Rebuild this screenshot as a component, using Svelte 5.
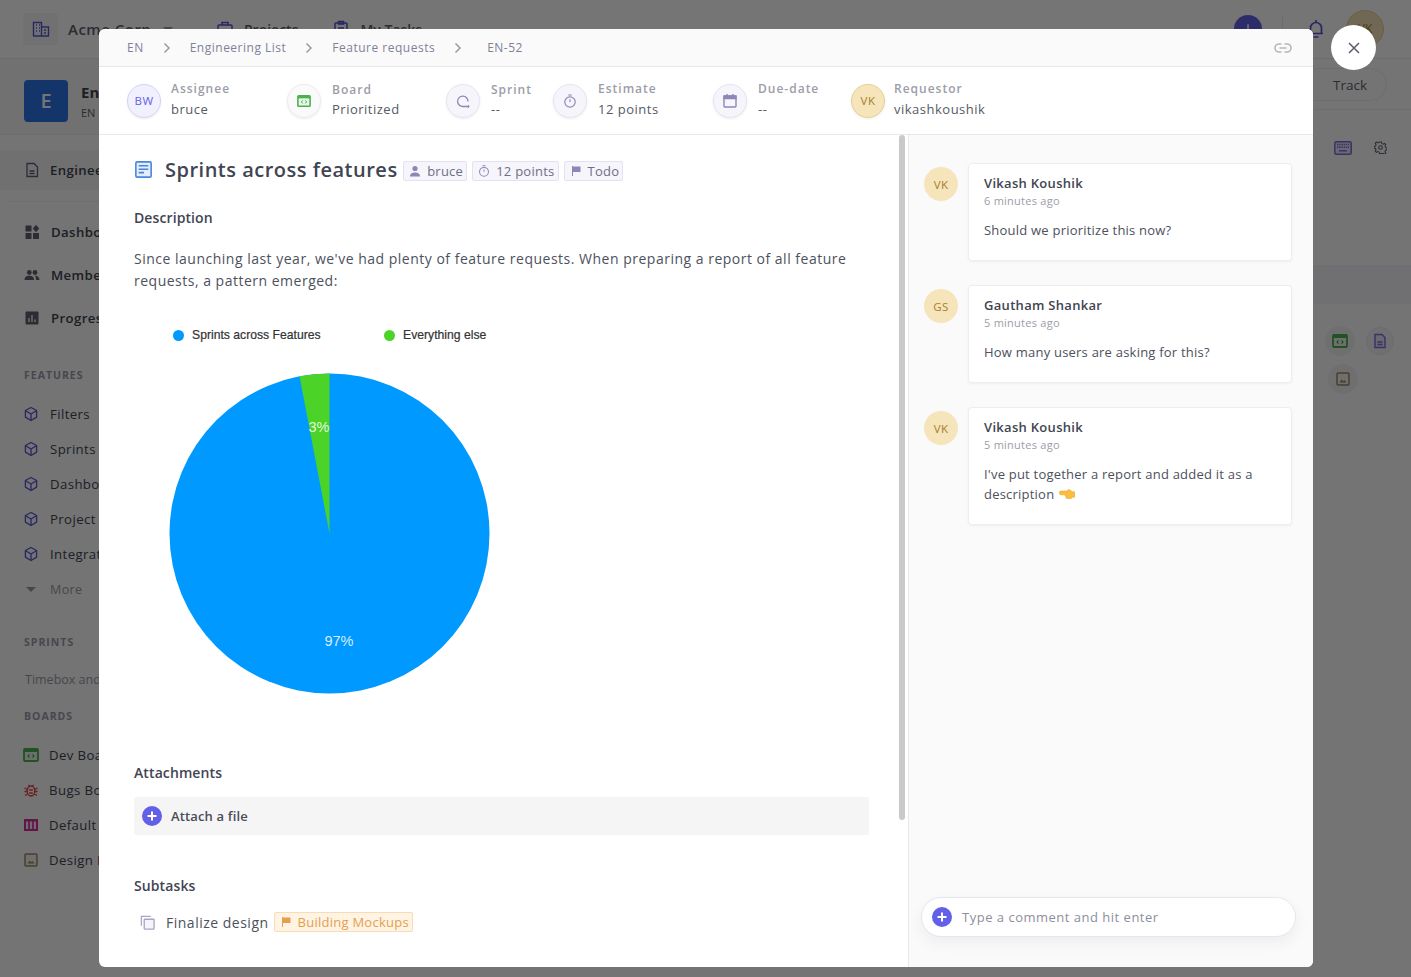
<script>
	const features = ['Filters', 'Sprints', 'Dashboards', 'Project Sync', 'Integrations'];
	const boards = [
		{ label: 'Dev Board', kind: 'dev' },
		{ label: 'Bugs Board', kind: 'bug' },
		{ label: 'Default Board', kind: 'kanban' },
		{ label: 'Design Board', kind: 'image' }
	];
	const crumbs = ['EN', 'Engineering List', 'Feature requests', 'EN-52'];
	const comments = [
		{ initials: 'VK', name: 'Vikash Koushik', time: '6 minutes ago', text: 'Should we prioritize this now?' },
		{ initials: 'GS', name: 'Gautham Shankar', time: '5 minutes ago', text: 'How many users are asking for this?' },
		{ initials: 'VK', name: 'Vikash Koushik', time: '5 minutes ago', text: "I've put together a report and added it as a description", hand: true }
	];

	// 3% slice, drawn counter clockwise from 12 o'clock
	const cx = 160.5, cy = 160.5, r = 160;
	const angle = 0.03 * 2 * Math.PI;
	const sx = cx - r * Math.sin(angle);
	const sy = cy - r * Math.cos(angle);
	const slice = `M${cx} ${cy} L${sx.toFixed(2)} ${sy.toFixed(2)} A${r} ${r} 0 0 1 ${cx} ${cy - r} Z`;
</script>

{#snippet cube()}
	<svg class="ico16" viewBox="0 0 16 16" fill="none" stroke="#5a55d6" stroke-width="1.3" stroke-linejoin="round">
		<path d="M8 1.500l5.600 3v6.600L8 14.500l-5.600-3.400V4.500z" /><path d="M2.600 4.700L8 8l5.400-3.300M8 8v6.300" />
	</svg>
{/snippet}

{#snippet devBoard(size)}
	<svg width={size} height={size} viewBox="0 0 16 16" fill="none">
		<rect x="1" y="2" width="14" height="12" rx="1" fill="#e9f7e7" stroke="#4caf50" stroke-width="1.800" />
		<rect x="1" y="2" width="14" height="3" fill="#4caf50" />
		<path d="M6.500 7.300L5 9l1.500 1.700M9.500 7.300L11 9l-1.500 1.700" stroke="#3a9d3f" stroke-width="1.100" />
	</svg>
{/snippet}

{#snippet imageIcon()}
	<svg class="ico16" viewBox="0 0 16 16" fill="none">
		<rect x="2" y="2" width="12" height="12" rx="1" stroke="#9b8a6a" stroke-width="1.500" fill="#f4f1ea" />
		<path d="M4.500 11.500l2.200-3 1.600 1.800 1.200-1.200 2 2.400z" fill="#9b8a6a" />
	</svg>
{/snippet}

{#snippet plusDot()}
	<svg class="plus" viewBox="0 0 20 20">
		<circle cx="10" cy="10" r="10" fill="#6360e8" />
		<path d="M10 5.500v9M5.500 10h9" stroke="#fff" stroke-width="2" />
	</svg>
{/snippet}

{#snippet timer(color)}
	<svg class="ico14" viewBox="0 0 14 14" fill="none" stroke={color} stroke-width="1.200">
		<circle cx="7" cy="8" r="5.200" /><path d="M5.200 1h3.600M7 5.200V8" />
	</svg>
{/snippet}

{#snippet flag(color)}
	<svg class="ico12" viewBox="0 0 12 12"><path d="M2 1h1v10H2zM3 1.500h7.500v5.500H3z" fill={color} /></svg>
{/snippet}

<div class="app">
	<header class="topbar">
		<div class="org">
			<span class="org-icon">
				<svg viewBox="0 0 18 18" width="18" height="18" fill="none" stroke="#5a55d6" stroke-width="1.400">
					<path d="M1.500 16V2.500h8V16M9.500 7h7v9M1 16h16" />
					<path d="M4 5h1M7 5h1M4 8h1M7 8h1M4 11h1M7 11h1M12 10h2M12 13h2" stroke-width="1.300" />
				</svg>
			</span>
			<span class="org-name">Acme Corp</span>
			<span class="caret"></span>
		</div>
		<nav class="top-links">
			<span class="top-link">
				<svg class="ico18" viewBox="0 0 18 18" fill="none" stroke="#5a55d6" stroke-width="1.500"><rect x="2" y="5" width="14" height="11" rx="1" /><path d="M6 5V2.500h6V5" /></svg>
				Projects
			</span>
			<span class="top-link">
				<svg class="ico18" viewBox="0 0 18 18" fill="none" stroke="#5a55d6" stroke-width="1.500"><rect x="3" y="3" width="12" height="13" rx="1" /><path d="M6.500 1.500h5V4h-5zM6 8h6M6 11h6" /></svg>
				My Tasks
			</span>
		</nav>
		<div class="top-right">
			<span class="add-circle">+</span>
			<span class="top-sep"></span>
			<svg class="bell" viewBox="0 0 16 20" fill="none" stroke="#5a55d6" stroke-width="1.700">
				<path d="M2.500 14.500V9a5.500 5.500 0 0 1 11 0v5.500zM1 14.500h14M8 1v2M5.500 18h5" />
			</svg>
			<span class="top-avatar">VK</span>
		</div>
	</header>

	<div class="shell">
		<aside class="sidebar">
			<div class="project">
				<span class="project-logo">E</span>
				<div>
					<div class="project-name">En</div>
					<div class="project-key">EN</div>
				</div>
			</div>
			<div class="nav-active">
				<svg class="ico16" viewBox="0 0 16 16" fill="none" stroke="#5e6270" stroke-width="1.300"><path d="M3 1.500h7l3.500 3.500v9.500H3zM5.500 9h5M5.500 11.500h5" /></svg>
				<span>Engineering List</span>
			</div>
			<div class="nav-main">
				<div class="nav-strong">
					<svg class="ico16" viewBox="0 0 16 16" fill="#5e6270"><rect x="1.500" y="1.500" width="6" height="6" /><rect x="1.500" y="9" width="6" height="6" /><rect x="9" y="9" width="6" height="6" /><path d="M12 .8l3.200 3.700L12 8.200 8.800 4.500z" /></svg>
					<span>Dashboard</span>
				</div>
				<div class="nav-strong">
					<svg class="ico16" viewBox="0 0 16 16" fill="#5e6270"><circle cx="5.300" cy="5.500" r="2.400" /><circle cx="11" cy="5.500" r="2.400" /><path d="M.5 13c0-3 2.200-4.300 4.800-4.300s4.800 1.300 4.800 4.300zM11 13h4.500c0-2.800-2-4.300-4.700-4.300 1 .9 1.200 2.700 1.200 4.300z" /></svg>
					<span>Members</span>
				</div>
				<div class="nav-strong">
					<svg class="ico16" viewBox="0 0 16 16"><rect x="1.500" y="1.500" width="13" height="13" rx="1" fill="#5e6270" /><path d="M5 12V8M8 12V5M11 12V9.500" stroke="#fff" stroke-width="1.300" /></svg>
					<span>Progress</span>
				</div>
			</div>

			<h4 class="side-title features-title">FEATURES</h4>
			{#each features as item}
				<div class="nav-item">{@render cube()}<span>{item}</span></div>
			{/each}
			<div class="nav-more"><span class="more-caret"></span><span>More</span></div>

			<h4 class="side-title sprints-title">SPRINTS</h4>
			<div class="side-hint">Timebox and ship</div>

			<h4 class="side-title boards-title">BOARDS</h4>
			{#each boards as board}
				<div class="nav-item board">
					{#if board.kind === 'dev'}
						{@render devBoard(16)}
					{:else if board.kind === 'bug'}
						<svg class="ico16" viewBox="0 0 16 16" fill="none" stroke="#e2433f" stroke-width="1.300"><ellipse cx="8" cy="9" rx="3.800" ry="5" /><path d="M5.500 3l1.500 1.500M10.500 3L9 4.500M1.500 6l3 1.500M14.500 6l-3 1.500M1.500 9.500h2.700M14.500 9.500h-2.700M2 13.500l2.600-1.500M14 13.500L11.400 12M6.200 8h3.600M6.200 11h3.600" /></svg>
					{:else if board.kind === 'kanban'}
						<svg class="ico16" viewBox="0 0 16 16"><rect x="1" y="2" width="14" height="12" fill="#d6309c" /><path d="M3 4.500h2.200v7.500H3zM6.900 4.500h2.200v7.500H6.900zM10.800 4.500H13v7.500h-2.200z" fill="#fbe4f3" /></svg>
					{:else}
						{@render imageIcon()}
					{/if}
					<span>{board.label}</span>
				</div>
			{/each}
		</aside>

		<main class="main">
			<div class="main-head"><span class="track">Track</span></div>
			<div class="toolbar">
				<svg class="keyboard" viewBox="0 0 18 14"><rect x=".8" y=".8" width="16.400" height="12.400" rx="1.500" fill="#e4e2fb" stroke="#7e6bdc" stroke-width="1.500" /><path d="M3 3.500h12M3 6.200h12" stroke="#7e6bdc" stroke-width="1.400" stroke-dasharray="1.400 .8" /><path d="M5 9.800h8" stroke="#7e6bdc" stroke-width="1.400" /></svg>
				<svg class="gear" viewBox="0 0 14 14" fill="none" stroke="#5e6270" stroke-width="1.100"><circle cx="7" cy="7" r="2" /><path d="M6 1h2l.4 1.700 1.500.7 1.500-.9 1.300 1.400-.9 1.500.6 1.500 1.600.6v1.900l-1.600.5-.6 1.500.9 1.500-1.300 1.400-1.500-.9-1.500.6L8 13.500H6l-.4-1.500-1.500-.6-1.500.9-1.300-1.400.9-1.500-.6-1.500L0 7.900V6l1.600-.5.600-1.500-.9-1.500 1.300-1.400 1.500.9 1.500-.7z" /></svg>
			</div>
			<div class="row-highlight"></div>
			<div class="row-icons">
				<span class="round-icon soft">{@render devBoard(16)}</span>
				<span class="round-icon doc">
					<svg class="ico16" viewBox="0 0 16 16" fill="#e4e2fb" stroke="#7e6bdc" stroke-width="1.400"><path d="M3 1.500h7l3 3v10H3zM5.500 9h5M5.500 11.500h5" /></svg>
				</span>
			</div>
			<div class="row-icons second">
				<span class="round-icon soft">{@render imageIcon()}</span>
			</div>
		</main>
	</div>

	<div class="overlay"></div>

	<section class="modal">
		<div class="crumbs">
			{#each crumbs as crumb, i}
				<span class="crumb">{crumb}</span>
				{#if i < crumbs.length - 1}
					<svg class="chev" viewBox="0 0 8 12" fill="none" stroke="#9a9ca8" stroke-width="1.500"><path d="M1.500 1.500L6 6l-4.500 4.500" /></svg>
				{/if}
			{/each}
			<svg class="link-icon" viewBox="0 0 18 12" fill="none" stroke="#b4b6bf" stroke-width="1.600"><path d="M7.500 2H5a4 4 0 0 0 0 8h2.500M10.500 2H13a4 4 0 0 1 0 8h-2.500M5.500 6h7" /></svg>
		</div>

		<div class="meta">
			<div class="meta-item w-assignee">
				<span class="disc purple"><span>BW</span></span>
				<div class="meta-text"><label>Assignee</label><b>bruce</b></div>
			</div>
			<div class="meta-item w-board">
				<span class="disc plain">{@render devBoard(14)}</span>
				<div class="meta-text low"><label>Board</label><b>Prioritized</b></div>
			</div>
			<div class="meta-item w-sprint">
				<span class="disc lilac">
					<svg class="ico16" viewBox="0 0 16 16" fill="none" stroke="#8d87b8" stroke-width="1.300"><path d="M13 8.500A5.200 5.200 0 1 0 8 13.500h6" /><path d="M12.800 12l1.400 1.500-1.400 1.300" stroke-width="1" /></svg>
				</span>
				<div class="meta-text low"><label>Sprint</label><b>--</b></div>
			</div>
			<div class="meta-item w-estimate">
				<span class="disc lilac">{@render timer('#8d87b8')}</span>
				<div class="meta-text"><label>Estimate</label><b>12 points</b></div>
			</div>
			<div class="meta-item w-due">
				<span class="disc lilac">
					<svg class="ico16" viewBox="0 0 16 16" fill="none" stroke="#8d87b8" stroke-width="1.400"><rect x="2" y="3" width="12" height="11" rx="1" /><path d="M2 3h12v2.500H2z" fill="#8d87b8" /><path d="M5 1v2M11 1v2" /></svg>
				</span>
				<div class="meta-text"><label>Due-date</label><b>--</b></div>
			</div>
			<div class="meta-item w-requestor">
				<span class="disc gold"><span>VK</span></span>
				<div class="meta-text"><label>Requestor</label><b>vikashkoushik</b></div>
			</div>
		</div>

		<div class="body">
			<div class="detail">
				<div class="title-row">
					<svg class="story" viewBox="0 0 16 16"><rect x=".8" y=".8" width="14.400" height="14.400" rx="1.200" fill="#e3edfb" stroke="#4a86d8" stroke-width="1.500" /><path d="M3.500 4.500h9M3.500 7.700h9M3.500 10.900h5" stroke="#4a86d8" stroke-width="1.500" /></svg>
					<h1>Sprints across features</h1>
					<span class="tag">
						<svg class="ico12" viewBox="0 0 12 12" fill="#8d87b8"><circle cx="6" cy="3.500" r="2.600" /><path d="M1 11.500c0-3 2.200-4 5-4s5 1 5 4z" /></svg>
						bruce
					</span>
					<span class="tag">{@render timer('#8d87b8')} 12 points</span>
					<span class="tag">{@render flag('#8d87b8')} Todo</span>
				</div>

				<h3 class="desc-head">Description</h3>
				<p class="desc">Since launching last year, we've had plenty of feature requests. When preparing a report of all feature requests, a pattern emerged:</p>

				<div class="legend">
					<span class="legend-item first"><i class="dot blue"></i>Sprints across Features</span>
					<span class="legend-item"><i class="dot green"></i>Everything else</span>
				</div>
				<svg class="pie" width="321" height="321" viewBox="0 0 321 321">
					<circle {cx} {cy} {r} fill="#0099ff" />
					<path d={slice} fill="#4cd327" />
					<text x="150" y="59" class="pie-label" text-anchor="middle">3%</text>
					<text x="170" y="273" class="pie-label" text-anchor="middle">97%</text>
				</svg>

				<h3 class="attach-head">Attachments</h3>
				<div class="attach">{@render plusDot()}<span>Attach a file</span></div>

				<h3 class="sub-head">Subtasks</h3>
				<div class="subtask">
					<svg class="copy" viewBox="0 0 16 16" fill="none" stroke="#a8a4c8" stroke-width="1.400"><path d="M1.500 11.500V1.500h10" /><rect x="4.500" y="4.500" width="10.500" height="10.500" rx=".5" fill="#f5f4fb" /></svg>
					<span class="sub-name">Finalize design</span>
					<span class="tag orange">{@render flag('#e3a04f')} Building Mockups</span>
				</div>
				<span class="scrollbar"></span>
			</div>

			<aside class="activity">
				<div class="comments">
					{#each comments as c}
						<div class="comment">
							<span class="c-avatar">{c.initials}</span>
							<div class="c-card">
								<div class="c-name">{c.name}</div>
								<div class="c-time">{c.time}</div>
								<p class="c-text">
									{c.text}
									{#if c.hand}
										<svg class="hand" viewBox="0 0 16 11"><path d="M.5 3.200c0-.7.5-1.100 1.200-1.100H8c.4-.9 1.100-1.500 2-1.600 1 .5 2.500 1.400 3.200 2.200H15.500v5.500h-2c-.5.800-1.400 1.300-2.400 1.300H8.400c-.9 0-1.500-.6-1.500-1.300 0-.2 0-.4.100-.6-.5-.2-.8-.6-.8-1.100 0-.3.100-.5.200-.7H1.700C1 5.800.5 5 .5 4.300z" fill="#fbbe3c" stroke="#e79a18" stroke-width=".5" /></svg>
									{/if}
								</p>
							</div>
						</div>
					{/each}
				</div>
				<div class="comment-box">
					{@render plusDot()}
					<span>Type a comment and hit enter</span>
				</div>
			</aside>
		</div>
	</section>

	<button class="close" aria-label="close">
		<svg viewBox="0 0 12 12" width="12" height="12" fill="none" stroke="#5a5d68" stroke-width="1.500"><path d="M1 1l10 10M11 1L1 11" /></svg>
	</button>
</div>

<style>
	:global(body) {
		margin: 0;
		background: #fff;
		font-family: 'Open Sans', 'Liberation Sans', sans-serif;
	}

	.app {
		position: relative;
		width: 1411px;
		height: 977px;
		overflow: hidden;
		color: #5e6270;
	}

	.ico12 { width: 12px; height: 12px; flex-shrink: 0; }
	.ico14 { width: 14px; height: 14px; flex-shrink: 0; }
	.ico16 { width: 16px; height: 16px; flex-shrink: 0; }
	.ico18 { width: 18px; height: 18px; flex-shrink: 0; }

	/* page behind the dialog */
	.topbar {
		display: flex;
		align-items: center;
		height: 58px;
		padding: 0 27px 0 23px;
		border-bottom: 1px solid #eee;
		background: #fff;
	}

	.org { display: flex; align-items: center; width: 193px; }

	.org-icon {
		display: flex;
		align-items: center;
		justify-content: center;
		width: 35px;
		height: 32px;
		margin-right: 10px;
		background: #f7f7f9;
		border-radius: 4px;
	}

	.org-name { font-size: 15px; font-weight: 600; letter-spacing: 0.5px; }

	.caret {
		margin-left: 12px;
		border-left: 5px solid transparent;
		border-right: 5px solid transparent;
		border-top: 5px solid #9a9ca8;
	}

	.top-links { display: flex; gap: 34px; font-size: 14px; font-weight: 600; }
	.top-link { display: flex; align-items: center; gap: 10px; }
	.top-right { display: flex; align-items: center; margin-left: auto; }

	.add-circle {
		width: 28px;
		height: 28px;
		border-radius: 50%;
		background: #6360e8;
		color: #fff;
		text-align: center;
		font-size: 20px;
		line-height: 28px;
	}

	.top-sep { width: 1px; height: 28px; margin: 0 25px 0 20px; background: #eee; }
	.bell { width: 16px; height: 20px; margin-right: 22px; }

	.top-avatar {
		width: 38px;
		height: 38px;
		border-radius: 50%;
		background: #f5e3b8;
		border: 1px solid #e8cf8e;
		box-sizing: border-box;
		color: #a57f2e;
		font-size: 12px;
		line-height: 36px;
		text-align: center;
	}

	.shell { display: flex; }

	.sidebar { width: 295px; flex-shrink: 0; height: 918px; background: #fcfcfc; }

	.project {
		display: flex;
		align-items: center;
		gap: 13px;
		box-sizing: border-box;
		height: 76px;
		padding: 9px 24px 0;
		border-bottom: 1px solid #f0f0f0;
		background: #f7f7f7;
	}

	.project-logo {
		width: 44px;
		height: 42px;
		border-radius: 4px;
		background: #2a73e8;
		color: #fff;
		font-size: 20px;
		font-weight: 600;
		line-height: 42px;
		text-align: center;
	}

	.project-name { font-size: 15px; font-weight: 700; color: #3f4450; }
	.project-key { font-size: 11px; margin-top: 3px; }

	.nav-active {
		display: flex;
		align-items: center;
		gap: 10px;
		height: 40px;
		margin-top: 15px;
		padding-left: 24px;
		background: #f4f4f5;
		font-size: 13.200px;
		font-weight: 600;
		color: #3f4450;
		letter-spacing: 0.4px;
	}

	.nav-main { margin: 11px 8px 0; border-top: 1px solid #f0f0f0; padding-top: 8px; }

	.nav-strong {
		display: flex;
		align-items: center;
		gap: 11px;
		height: 43px;
		padding-left: 16px;
		font-size: 13.200px;
		font-weight: 600;
		color: #3f4450;
		letter-spacing: 0.4px;
	}

	.side-title {
		margin: 0;
		padding-left: 24px;
		font-size: 10.500px;
		font-weight: 700;
		line-height: 14px;
		letter-spacing: 1px;
		color: #9a9ca8;
	}

	.features-title { margin-top: 29px; margin-bottom: 14px; }

	.nav-item {
		display: flex;
		align-items: center;
		gap: 11px;
		height: 35px;
		padding-left: 23px;
		font-size: 13.200px;
		color: #434754;
		letter-spacing: 0.4px;
	}

	.nav-item.board { gap: 10px; }

	.nav-more {
		display: flex;
		align-items: center;
		gap: 14px;
		height: 35px;
		margin-top: 1px;
		padding-left: 26px;
		font-size: 12.500px;
		letter-spacing: 0.4px;
		color: #9a9ca8;
	}

	.more-caret {
		border-left: 5px solid transparent;
		border-right: 5px solid transparent;
		border-top: 5px solid #9a9ca8;
	}

	.sprints-title { margin-top: 28px; }

	.side-hint {
		margin-top: 22px;
		padding-left: 25px;
		font-size: 12.500px;
		line-height: 17px;
		color: #9a9ca8;
	}

	.boards-title { margin-top: 21px; margin-bottom: 14px; }

	.main { flex: 1; background: #fdfdfd; }

	.main-head {
		display: flex;
		justify-content: flex-end;
		align-items: center;
		height: 50px;
		padding-right: 24px;
		border-bottom: 1px solid #eee;
	}

	.track {
		display: block;
		width: 120px;
		height: 33px;
		padding-left: 65px;
		box-sizing: border-box;
		border: 1px solid #eee;
		border-radius: 17px;
		font-size: 13.500px;
		line-height: 32px;
	}

	.toolbar {
		display: flex;
		align-items: center;
		justify-content: flex-end;
		gap: 22px;
		height: 75px;
		padding-right: 24px;
	}

	.keyboard { width: 18px; height: 14px; }
	.gear { width: 13px; height: 13px; }

	.row-highlight { height: 39px; margin-top: 80px; background: #f4f4f8; }

	.row-icons {
		display: flex;
		justify-content: flex-end;
		align-items: center;
		gap: 11px;
		margin-top: 22px;
		padding-right: 17px;
	}

	.row-icons.second { margin-top: 8px; padding-right: 53px; }

	.round-icon {
		display: flex;
		align-items: center;
		justify-content: center;
		width: 30px;
		height: 30px;
		border-radius: 50%;
	}

	.round-icon.soft { background: #f2f2f2; }
	.round-icon.doc { width: 26px; height: 26px; background: #f4f3fb; border: 1px solid #e9e7f5; }

	.overlay {
		position: absolute;
		inset: 0;
		background: rgba(0, 0, 0, 0.54);
	}

	/* dialog */
	.modal {
		position: absolute;
		left: 99px;
		top: 29px;
		display: flex;
		flex-direction: column;
		width: 1214px;
		height: 938px;
		border-radius: 6px;
		overflow: hidden;
		background: #fff;
	}

	.crumbs {
		display: flex;
		align-items: center;
		flex-shrink: 0;
		height: 37px;
		padding: 0 21px 0 28px;
		background: #fafafa;
		border-bottom: 1px solid #e8e8e8;
		font-size: 12px;
		letter-spacing: 0.5px;
		color: #7f8197;
	}

	.chev { width: 8px; height: 12px; margin: 0 19px; }
	.chev:nth-of-type(3) { margin-right: 25px; }

	.link-icon { width: 18px; height: 12px; margin-left: auto; }

	.meta {
		display: flex;
		flex-shrink: 0;
		align-items: center;
		height: 67px;
		padding-left: 28px;
		border-bottom: 1px solid #e8e8e8;
	}

	.meta-item { display: flex; align-items: center; gap: 11px; }
	.w-assignee { width: 160px; gap: 10px; }
	.w-board { width: 159px; }
	.w-sprint { width: 107px; }
	.w-estimate { width: 160px; }
	.w-estimate b { letter-spacing: 0.2px; }
	.w-due { width: 138px; }
	.w-requestor { gap: 9px; }

	.disc {
		display: flex;
		align-items: center;
		justify-content: center;
		box-sizing: border-box;
		width: 34px;
		height: 34px;
		border-radius: 50%;
		font-size: 11.500px;
		letter-spacing: 0.5px;
		box-shadow: 0 1px 3px rgba(0, 0, 0, 0.07);
	}

	.disc.purple { background: #f1f0fd; border: 1px solid #d6d4f7; color: #6360e8; }
	.disc.plain { background: #fafafa; border: 1px solid #ececec; }
	.disc.lilac { background: #f6f5fb; border: 1px solid #e6e4f2; }
	.disc.gold { background: #f6e4bb; border: 1px solid #e9d08f; color: #a57f2e; }

	.meta-text { display: flex; flex-direction: column; margin-top: -2px; }
	.meta-text label {
		font-size: 12px;
		font-weight: 600;
		line-height: 16px;
		letter-spacing: 1px;
		color: #9c9da8;
	}
	.meta-text b {
		margin-top: 3px;
		font-size: 13px;
		font-weight: 400;
		line-height: 18px;
		letter-spacing: 0.5px;
		color: #555a66;
	}
	.meta-text.low label { padding-top: 1px; }
	.meta-text.low b { margin-top: 2px; }

	.body { display: flex; flex: 1; min-height: 0; }

	.detail {
		position: relative;
		width: 810px;
		flex-shrink: 0;
		box-sizing: border-box;
		padding: 0 39px 0 35px;
		overflow: hidden;
		border-right: 1px solid #e8e8e8;
	}

	.scrollbar {
		position: absolute;
		top: 0;
		right: 3px;
		width: 6px;
		height: 685px;
		border-radius: 3px;
		background: #c9c9c9;
	}

	.title-row { display: flex; align-items: center; height: 30px; margin-top: 19px; }

	.story { width: 17px; height: 17px; margin: 0 13px 0 1px; }

	h1 {
		margin: 0 5.500px 0 0;
		font-size: 20px;
		font-weight: 600;
		letter-spacing: 0.5px;
		color: #414552;
		white-space: nowrap;
	}

	.tag {
		display: inline-flex;
		align-items: center;
		gap: 6px;
		box-sizing: border-box;
		height: 20px;
		margin-right: 5px;
		margin-top: 4px;
		padding: 0 3px 0 5px;
		border: 1px solid #e3e1f2;
		border-radius: 2px;
		background: #f6f5fb;
		font-size: 13px;
		letter-spacing: 0.25px;
		color: #6e6f85;
		white-space: nowrap;
	}

	.tag :global(.ico14) { width: 12px; height: 12px; }

	.tag.orange {
		margin: 0;
		background: #fff3e3;
		border-color: #fbdcb2;
		color: #e3a04f;
	}

	h3 {
		margin: 0;
		font-size: 14px;
		font-weight: 600;
		line-height: 20px;
		letter-spacing: 0.1px;
		color: #414552;
	}

	.desc-head { margin-top: 24px; }

	.desc {
		margin: 20px 0 0;
		font-size: 14px;
		line-height: 22px;
		letter-spacing: 0.5px;
		color: #4d515d;
	}

	.legend {
		display: flex;
		margin: 35px 0 0 39px;
		font-family: 'Liberation Sans', Arial, sans-serif;
		font-size: 12.200px;
		line-height: 16px;
		color: #333;
		-webkit-text-stroke: 0.2px #333;
	}

	.legend-item { display: flex; align-items: center; gap: 8px; }
	.legend-item.first { width: 211px; }

	.dot { width: 11px; height: 11px; border-radius: 50%; }
	.dot.blue { background: #0099ff; }
	.dot.green { background: #4cd327; }

	.pie { display: block; margin: 30px 0 0 35px; }

	.pie-label {
		font-family: 'Liberation Sans', Arial, sans-serif;
		font-size: 14.500px;
		fill: #fff;
		fill-opacity: 0.85;
	}

	.attach-head { margin-top: 69px; }

	.attach {
		display: flex;
		align-items: center;
		gap: 9px;
		height: 38px;
		margin-top: 14px;
		padding-left: 8px;
		border-radius: 3px;
		background: #f5f5f5;
		font-size: 13px;
		font-weight: 600;
		letter-spacing: 0.15px;
		color: #484c59;
	}

	.plus { width: 20px; height: 20px; flex-shrink: 0; }

	.sub-head { margin-top: 41px; }

	.subtask {
		display: flex;
		align-items: center;
		height: 20px;
		margin-top: 16px;
		padding-left: 6px;
	}

	.copy { width: 15px; height: 15px; margin-right: 11px; }

	.sub-name {
		margin-right: 5px;
		font-size: 14px;
		letter-spacing: 0.5px;
		color: #4d515d;
	}

	.activity {
		display: flex;
		flex-direction: column;
		flex: 1;
		background: #fafafa;
	}

	.comments {
		display: flex;
		flex-direction: column;
		gap: 24px;
		flex: 1;
		padding: 28px 21px 0 15px;
	}

	.comment { display: flex; align-items: flex-start; gap: 10px; }

	.c-avatar {
		width: 34px;
		height: 34px;
		margin-top: 4px;
		flex-shrink: 0;
		border-radius: 50%;
		background: #f6e4bb;
		color: #a57f2e;
		font-size: 11.500px;
		line-height: 35px;
		text-align: center;
		letter-spacing: 0.3px;
	}

	.c-card {
		flex: 1;
		box-sizing: border-box;
		min-height: 98px;
		padding: 10px 15px 20px;
		border: 1px solid #eee;
		border-radius: 4px;
		background: #fff;
		box-shadow: 0 1px 3px rgba(0, 0, 0, 0.05);
	}

	.c-name {
		font-size: 13px;
		font-weight: 600;
		line-height: 19px;
		letter-spacing: 0.3px;
		color: #414552;
	}

	.c-time {
		font-size: 11px;
		line-height: 16px;
		letter-spacing: 0.25px;
		color: #9c9da8;
	}

	.c-text {
		margin: 11px 0 0;
		font-size: 13px;
		line-height: 20px;
		letter-spacing: 0.22px;
		color: #4d515d;
	}

	.hand { display: inline-block; width: 16px; height: 11px; margin-left: 1px; vertical-align: -1px; }

	.comment-box {
		display: flex;
		align-items: center;
		gap: 10px;
		box-sizing: border-box;
		height: 40px;
		margin: 0 17px 30px 12px;
		padding-left: 10px;
		border: 1px solid #e6e6ee;
		border-radius: 20px;
		background: #fff;
		box-shadow: 0 6px 14px rgba(70, 70, 120, 0.07);
		font-size: 13px;
		letter-spacing: 0.5px;
		color: #8d8f9d;
	}

	.close {
		position: absolute;
		left: 1331px;
		top: 25px;
		display: flex;
		align-items: center;
		justify-content: center;
		width: 45px;
		height: 45px;
		padding: 0;
		border: 0;
		border-radius: 50%;
		background: #fff;
	}
</style>
